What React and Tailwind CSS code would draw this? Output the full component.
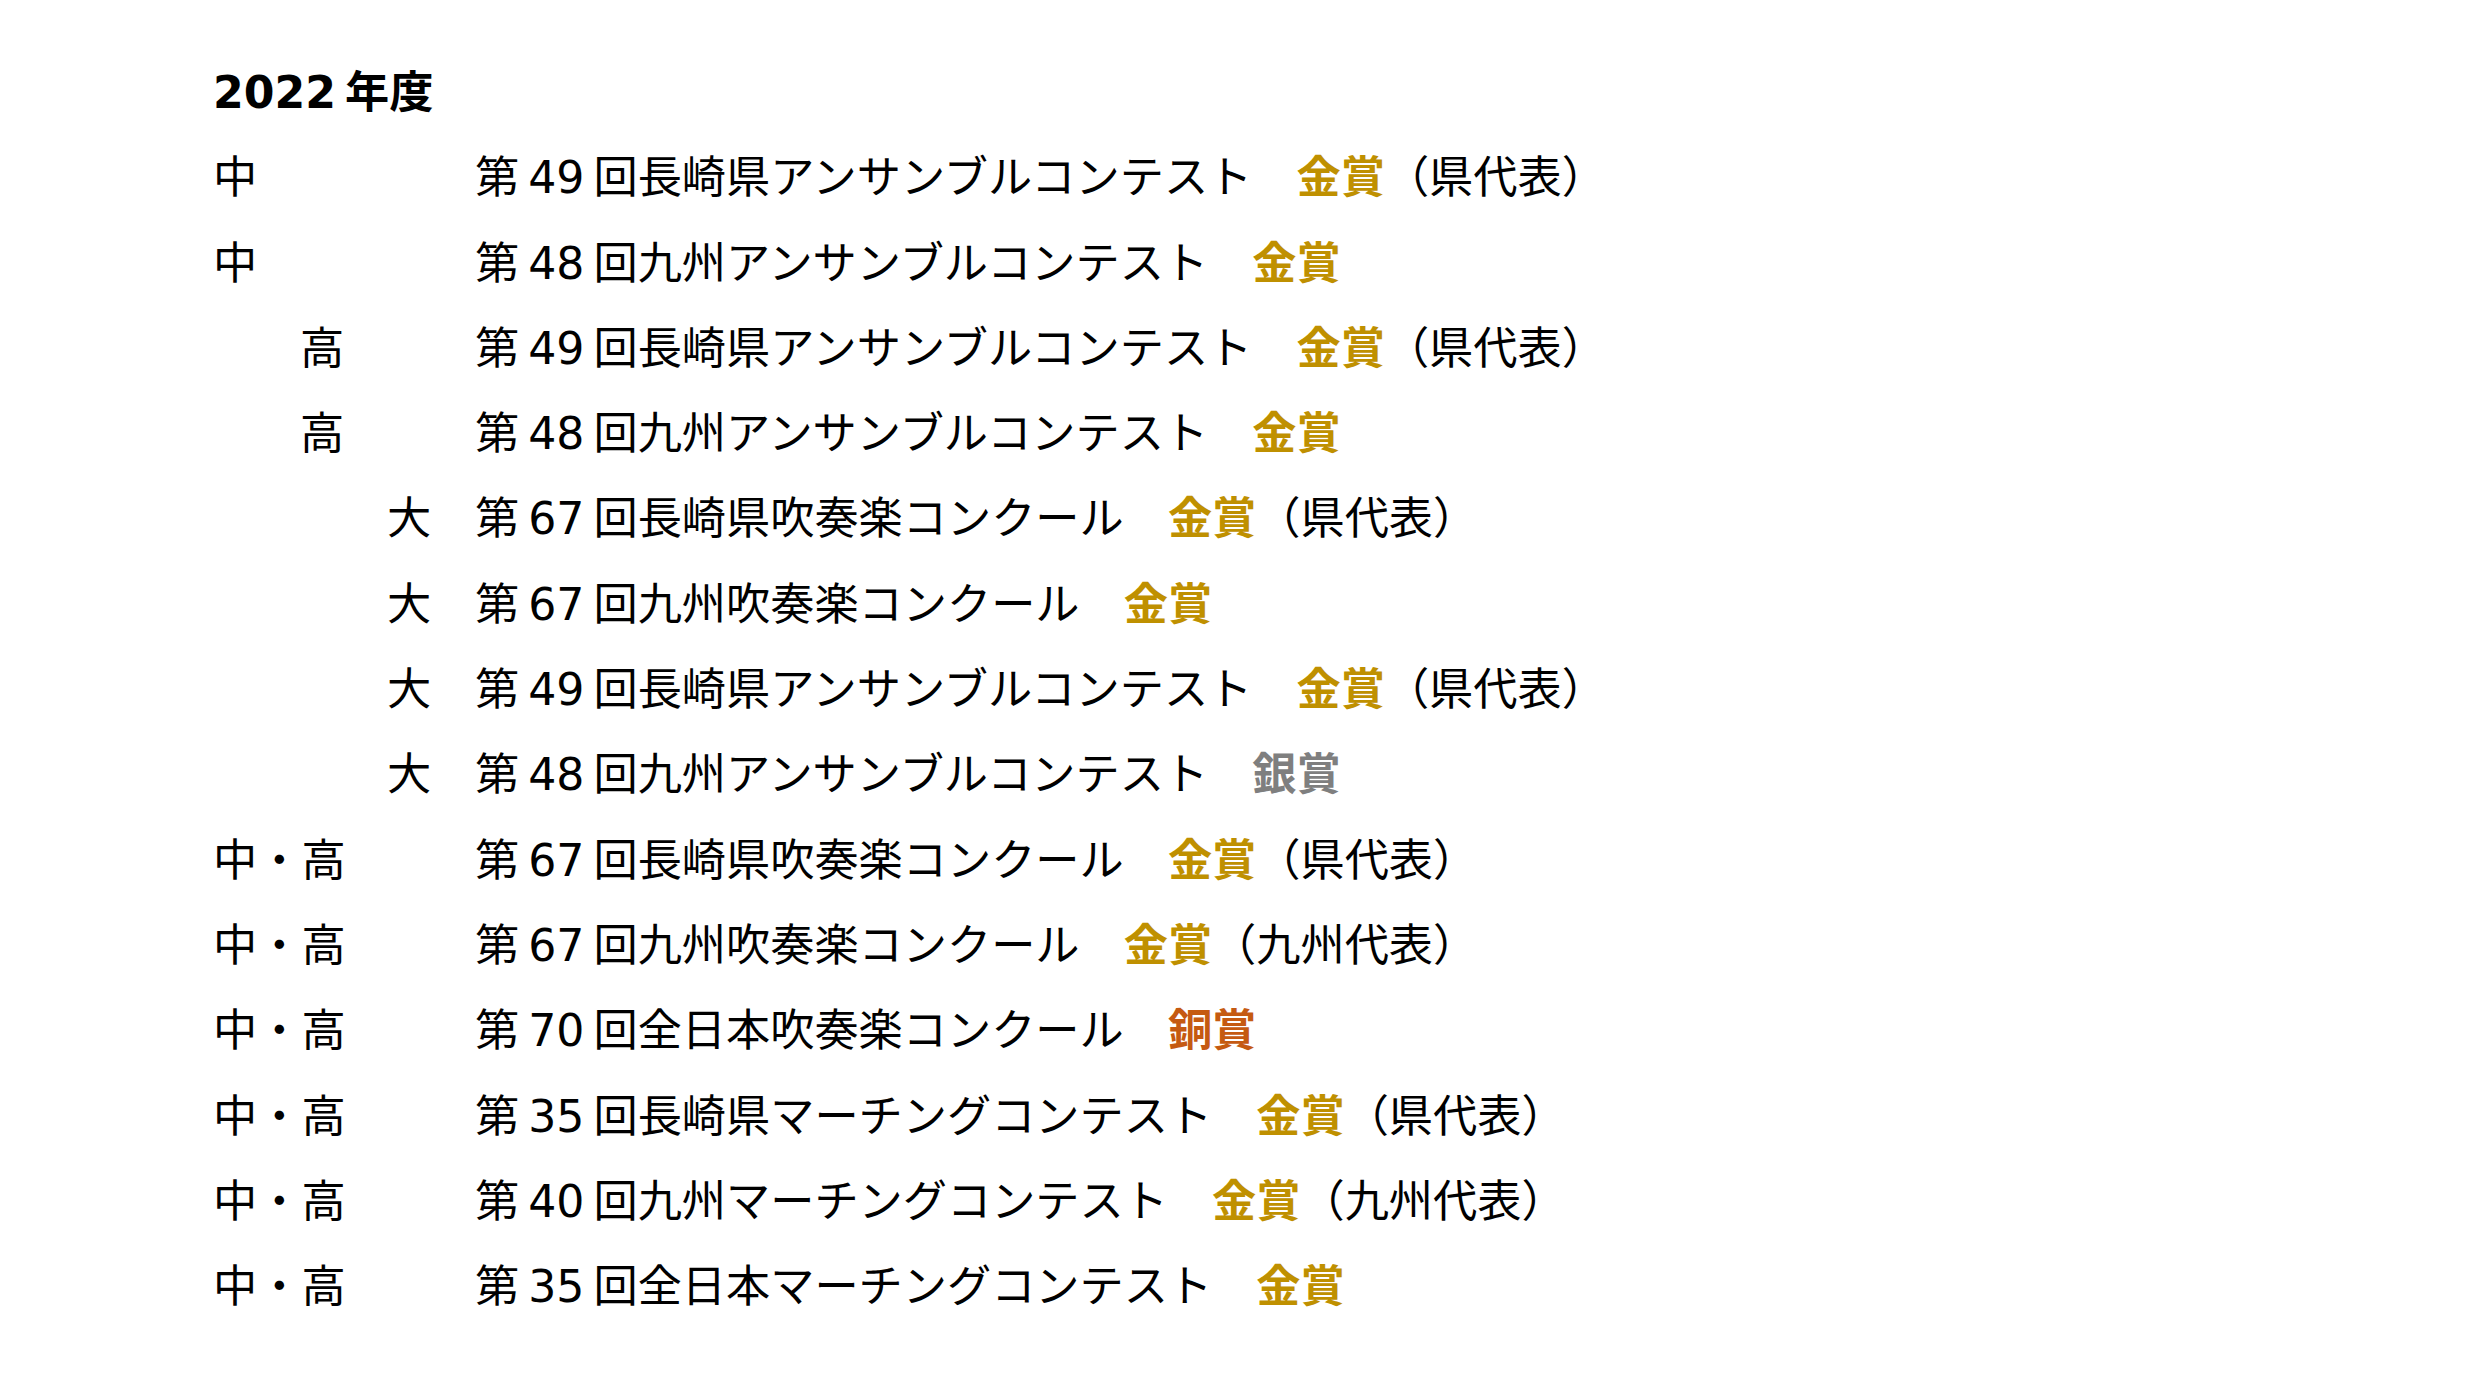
const rows = [
  { level: "中", pad: 0, no: "49", name: "長崎県アンサンブルコンテスト", award: "金賞", note: "（県代表）" },
  { level: "中", pad: 0, no: "48", name: "九州アンサンブルコンテスト", award: "金賞" },
  { level: "高", pad: 2, no: "49", name: "長崎県アンサンブルコンテスト", award: "金賞", note: "（県代表）" },
  { level: "高", pad: 2, no: "48", name: "九州アンサンブルコンテスト", award: "金賞" },
  { level: "大", pad: 4, no: "67", name: "長崎県吹奏楽コンクール", award: "金賞", note: "（県代表）" },
  { level: "大", pad: 4, no: "67", name: "九州吹奏楽コンクール", award: "金賞" },
  { level: "大", pad: 4, no: "49", name: "長崎県アンサンブルコンテスト", award: "金賞", note: "（県代表）" },
  { level: "大", pad: 4, no: "48", name: "九州アンサンブルコンテスト", award: "銀賞" },
  { level: "中・高", pad: 0, no: "67", name: "長崎県吹奏楽コンクール", award: "金賞", note: "（県代表）" },
  { level: "中・高", pad: 0, no: "67", name: "九州吹奏楽コンクール", award: "金賞", note: "（九州代表）" },
  { level: "中・高", pad: 0, no: "70", name: "全日本吹奏楽コンクール", award: "銅賞" },
  { level: "中・高", pad: 0, no: "35", name: "長崎県マーチングコンテスト", award: "金賞", note: "（県代表）" },
  { level: "中・高", pad: 0, no: "40", name: "九州マーチングコンテスト", award: "金賞", note: "（九州代表）" },
  { level: "中・高", pad: 0, no: "35", name: "全日本マーチングコンテスト", award: "金賞" },
]

// award colours
const awardColor = {
  "金賞": "text-[#bf9000]",
  "銀賞": "text-[#7f7f7f]",
  "銅賞": "text-[#c55a11]",
}

const padClass = ["pl-0", "pl-[87px]", "pl-[87px]", "pl-[174px]", "pl-[174px]"]

function Num({ children }) {
  return <span className="mx-[9px] font-['DejaVu_Sans'] leading-none">{children}</span>
}

export default function App() {
  return (
    <div className="min-h-screen w-full bg-white text-black font-['Noto_Sans_CJK_JP',sans-serif] text-[44.2px] leading-[85.3px]">
      <div className="pt-[47px] pl-[213px]">
        <h1 className="font-bold whitespace-nowrap">
          <span className="mr-[9px] font-['DejaVu_Sans'] leading-none">2022</span>
          年度
        </h1>
        {rows.map((r, i) => (
          <div key={i} className="flex whitespace-nowrap">
            <div className={"w-[262px] shrink-0 " + padClass[r.pad]}>{r.level}</div>
            <div>
              第<Num>{r.no}</Num>回{r.name}
              <span className="inline-block w-[44.2px]"></span>
              <span className={"font-bold " + awardColor[r.award]}>{r.award}</span>
              {r.note && <span>{r.note}</span>}
            </div>
          </div>
        ))}
      </div>
    </div>
  )
}
